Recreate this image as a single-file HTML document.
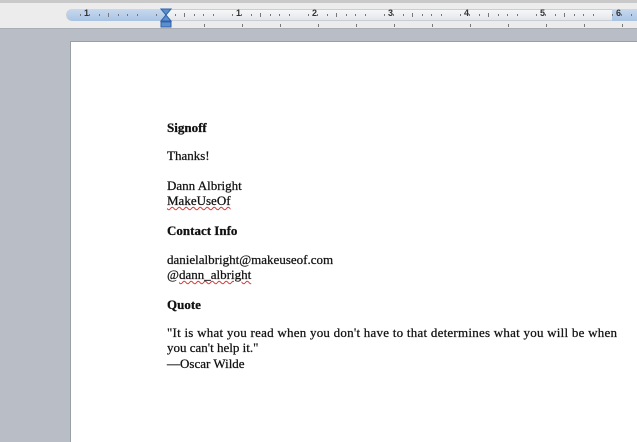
<!DOCTYPE html>
<html><head><style>
body{margin:0;width:637px;height:427px;overflow:hidden;background:#b8bdc6;position:relative;font-family:"Liberation Serif",serif}
.top{position:absolute;left:0;top:0;width:637px;height:3px;background:#c9c9c9}
.rul{position:absolute;left:0;top:3px;width:637px;height:25px;background:#ececec;border-bottom:1px solid #a9adb4}
.bar{position:absolute;left:66px;top:9px;width:600px;height:12px;border-radius:6px;background:linear-gradient(#f6f7f8,#e3e6ea);border:1px solid #c9ced6;box-sizing:border-box}
.blue{position:absolute;top:9px;height:12px;background:linear-gradient(#c7d9ee,#a9c4e3)}
.n{position:absolute;top:8px;font:bold 9px "Liberation Sans",sans-serif;color:#333}
.t{position:absolute;width:1px;background:#777}
.page{position:absolute;left:70px;top:41px;width:600px;height:400px;background:#fff;border-left:1px solid #9a9ea6;border-top:1px solid #9a9ea6}
.l{position:absolute;left:167px;font-size:13px;color:#111;white-space:nowrap;-webkit-text-stroke:0.25px #111}
b{font-weight:bold}
.sq{text-decoration:underline wavy #d33;text-decoration-thickness:1px}
</style></head><body>
<div class="top"></div>
<div class="rul"></div>
<div class="bar"></div>
<div class="blue" style="left:67px;width:98px;border-radius:6px 0 0 6px"></div>
<div class="blue" style="left:612px;width:25px"></div>
<div class="n" style="left:84px">1</div>
<div class="n" style="left:236px">1</div>
<div class="n" style="left:312px">2</div>
<div class="n" style="left:388px">3</div>
<div class="n" style="left:464px">4</div>
<div class="n" style="left:540px">5</div>
<div class="n" style="left:616px">6</div>
<div id="ticks"></div>
<svg style="position:absolute;left:160px;top:8px" width="12" height="20"><path d="M1 1h10l-5 6zM6 7l-5 6h10z" fill="#5b8fd0" stroke="#2f62a8"/><rect x="1" y="14" width="10" height="5" fill="#5b8fd0" stroke="#2f62a8"/></svg>
<div class="page"></div>
<div class="l" style="top:120px"><b>Signoff</b></div>
<div class="l" style="top:148px">Thanks!</div>
<div class="l" style="top:178px">Dann Albright</div>
<div class="l" style="top:193px"><span class="sq">MakeUseOf</span></div>
<div class="l" style="top:223px"><b>Contact Info</b></div>
<div class="l" style="top:252px">danielalbright@makeuseof.com</div>
<div class="l" style="top:267px">@<span class="sq">dann_albright</span></div>
<div class="l" style="top:297px"><b>Quote</b></div>
<div class="l" style="top:325px;letter-spacing:0.24px">"It is what you read when you don't have to that determines what you will be when</div>
<div class="l" style="top:340px">you can't help it."</div>
<div class="l" style="top:356px">—Oscar Wilde</div>
<script>
var h='';for(var x=70;x<637;x+=9.5){var k=Math.round((x-70)/9.5)%8;if(k==0)continue;h+='<div class="t" style="left:'+Math.round(x)+'px;top:'+(k==4?13:14)+'px;height:'+(k==4?4:2)+'px"></div>';}
for(var x=204;x<637;x+=38){h+='<div class="t" style="left:'+Math.round(x)+'px;top:24px;height:3px"></div>';}
document.getElementById('ticks').innerHTML=h;
</script>
</body></html>
